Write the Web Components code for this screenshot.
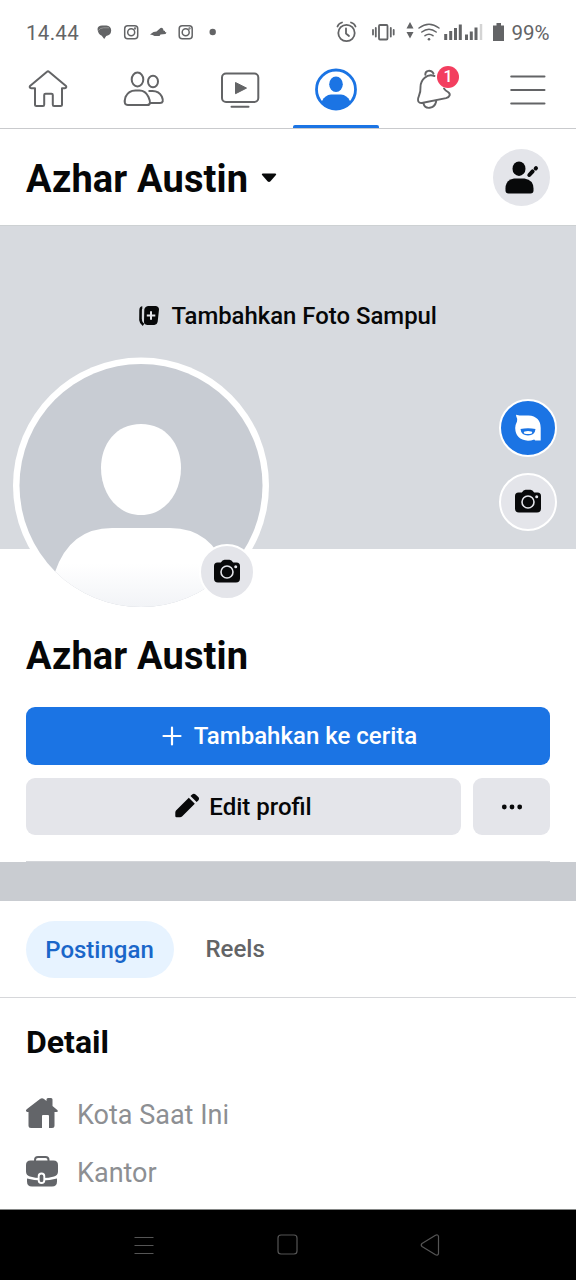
<!DOCTYPE html>
<html lang="id">
<head>
<meta charset="utf-8">
<meta name="viewport" content="width=device-width">
<title>Azhar Austin</title>
<style>
body{margin:0;background:#fff;font-family:Roboto,"Liberation Sans",sans-serif;color:#060708}
</style>
</head>
<body>
<profile-app></profile-app>
<script>
const define = (name, css, html) => customElements.define(name, class extends HTMLElement {
  constructor() {
    super();
    const t = document.createElement('template');
    t.innerHTML = `<style>*{box-sizing:border-box}svg{display:block;flex:none}${css}</style>${html}`;
    this.attachShadow({mode: 'open'}).append(t.content.cloneNode(true));
  }
});

/* Status bar */
define('status-bar', `
:host{display:flex;justify-content:space-between;height:61px;padding:4px 26px 0 26px;color:#636466;font-size:20.5px;line-height:58px}
div{display:flex}
.t{width:64px;letter-spacing:.3px}
.p{width:38.500px;letter-spacing:0;white-space:nowrap}`,
`<div><span class="t">14.44</span>
<svg width="132" height="57" viewBox="90 4 132 57" fill="none" stroke="#636466" stroke-width="1.500">
<path d="M97.500 29q.3-3.500 4.500-3.500h4.500q4.500.3 4.700 5-.2 4.500-5 5.500l-2 3-2.400-3.300q-4-1.700-4.300-6.700z" fill="#636466" stroke="none"/><path d="M98.500 30.500q1.500-2.500 5-2.700h5.500" stroke="#aaa" stroke-width=".7"/>
<g id="ig"><rect x="124.700" y="25.700" width="13" height="13" rx="3"/><circle cx="131.200" cy="32.200" r="3.500"/><circle cx="135" cy="28.500" r=".4"/></g>
<path d="M150 34.500l3.500-2.500 3-.5 4-3.500q3-.7 3 2.500l1.500.5v1l1.500.5-1 1.500-5 .5-1 1.500h-5l-2-.9z" fill="#636466" stroke="none"/>
<use href="#ig" x="54.500"/>
<circle cx="212.700" cy="32" r="3.200" fill="#636466" stroke="none"/></svg></div>
<div><svg width="182" height="57" viewBox="330 4 182 57" fill="none" stroke="#636466" stroke-width="1.800" stroke-linecap="round">
<circle cx="346.500" cy="33" r="8.200"/><path d="M346 28.500v5l3 2.500M337.500 26.500q1-3 4.500-4M355.500 26.500q-1-3-4.500-4"/>
<rect x="379" y="25" width="8.500" height="14.500" rx="1"/><path d="M375.800 28v8.500M373 30v4.500M390.800 28v8.500M393.700 30v4.500"/>
<path d="M410 22l3.500 6.500h-7zM410 38.500l3.500-6.500h-7z" fill="#636466" stroke="none"/>
<path d="M419 28q10-7.500 20 0M421.800 32q7.200-5.500 14.400 0M425 35.700q4-3 8 0" stroke-width="1.500"/><circle cx="429" cy="39.300" r="1.300" fill="#636466" stroke="none"/>
<path d="M445.700 34v6M450.700 31v9M455.500 28v12M460.300 24.500v15.500M466.500 34.500v5.500M471.300 31.500v8.500M476 27.500v12.500" stroke-width="3" stroke-linecap="butt"/><path d="M481 24v16" stroke="#d4d4d4" stroke-width="2.500" stroke-linecap="butt"/>
<path d="M493 25.500h3.500v-2.500h4.500v2.500h3V41h-11z" fill="#636466" stroke="none"/></svg><span class="p">99%</span></div>`);

/* Main navigation */
define('nav-tab', `:host{display:block;flex:1;height:67px}`, `<slot></slot>`);
define('top-nav', `
:host{display:flex;height:68px;border-bottom:1px solid #c9cacd}
.bell{position:relative;display:block;height:67px}
.badge{position:absolute;left:53px;top:5px;width:22px;height:22px;border-radius:50%;background:#f33e5f;color:#fff;font:500 16px/22px Roboto,sans-serif;text-align:center}`,
`<nav-tab><svg width="96" height="67" viewBox="0 61 96 67" fill="none" stroke="#636466" stroke-width="2" stroke-linejoin="round"><path d="M47 71.700q1-1 2 0L66 86q1 2-1.300 2.200h-2.700v16.300q0 1.500-1.500 1.500H54q-1.200 0-1.200-1.500V95q0-1.200-1.300-1.200h-6q-1.300 0-1.300 1.200v9.500q0 1.500-1.200 1.500h-6.500q-1.500 0-1.500-1.500V88.200h-3.700q-2.300-.2-1.300-2.200z"/></svg></nav-tab>
<nav-tab><svg width="96" height="67" viewBox="96 61 96 67" fill="none" stroke="#636466" stroke-width="2" stroke-linejoin="round"><ellipse cx="137.500" cy="79.500" rx="5.800" ry="6.900"/><ellipse cx="153" cy="81.500" rx="5" ry="5.800"/><path d="M135.500 90.500h4q6 0 9 6.500 3.500 8-1.300 8H128q-5 0-2.500-8 3-6.500 10-6.500zM148.500 91h4q6.500 0 9.300 5.500 2.700 6.500-1.800 6.500h-10"/></svg></nav-tab>
<nav-tab><svg width="96" height="67" viewBox="192 61 96 67" fill="none" stroke="#636466" stroke-width="2"><rect x="222" y="73.500" width="36.300" height="28.500" rx="4"/><path d="M231.500 106.700h17" stroke-linecap="round"/><path d="M235.500 82.500l11 5.600-11 5.600z" fill="#636466" stroke-width="1" stroke-linejoin="round"/></svg></nav-tab>
<nav-tab><svg width="96" height="67" viewBox="288 61 96 67" fill="#1b74e4"><clipPath id="c"><circle cx="336" cy="89.500" r="20"/></clipPath><circle cx="336" cy="89.500" r="19.500" fill="none" stroke="#1b74e4" stroke-width="2.800"/><ellipse cx="336" cy="84.300" rx="6.800" ry="7.700"/><path clip-path="url(#c)" d="M322 101q3-6 9-6.500h10q6 .5 9 6.500v12h-28z"/><path d="M293 128v-1q0-2 2-2h82q2 0 2 2v1z"/></svg></nav-tab>
<nav-tab><span class="bell"><svg width="96" height="67" viewBox="384 61 96 67" fill="none" stroke="#636466" stroke-width="1.900" stroke-linecap="round"><path d="M425.300 74.800C425 70 431 69.500 433.500 73.500M434.500 76C427 73 420.500 80 420.500 87C421 95 417.500 96.500 418 100C418 103 420.500 103.300 423 102.800L446 98.200C450 97 451 94 448 92C445.500 90.500 445 90 444 88.500M423.500 103.500C425 110 434.500 109 436.200 101.500"/></svg><span class="badge">1</span></span></nav-tab>
<nav-tab><svg width="96" height="67" viewBox="480 61 96 67" stroke="#636466" stroke-width="2" stroke-linecap="round"><path d="M511.200 76.500h33.300M511.200 90h33.300M511.200 103.500h33.300"/></svg></nav-tab>`);

/* Round icon button */
define('round-button', `
:host{display:flex;align-items:center;justify-content:center;width:58px;height:58px;border-radius:50%;background:#e4e5ea;box-sizing:border-box}`, `<slot></slot>`);
define('camera-icon', `:host{display:block}`,
`<svg width="28" height="26" viewBox="0 0 28 26"><path d="M4.500 3.500h3.300Q9.500.800 11.500.800h5q2 0 3.700 2.700h3.300q3.500 0 3.500 3.500v12.500q0 4-4 4H5q-4 0-4-4V7q0-3.500 3.500-3.500z" fill="#08090a"/><circle cx="14" cy="13" r="6" fill="none" stroke="#e4e5ea" stroke-width="1.600"/><circle cx="22.700" cy="7.700" r="1.500" fill="#e4e5ea"/></svg>`);

define('account-header', `
:host{display:flex;align-items:center;height:96px;padding:0 26px}
h1{margin:0;font:700 38px/96px Roboto,sans-serif;padding-top:3px;letter-spacing:.15px;width:235px;white-space:nowrap}
.caret{margin-top:2px}
round-button{margin:1px 0 0 auto;width:57px;height:57px}`,
`<h1>Azhar Austin</h1><svg class="caret" width="16" height="10" viewBox="0 0 16 10"><path d="M1.800.500h12.400q1.700 0 .7 1.500L9.500 8.200q-1.500 1.500-3 0L1.100 2q-1-1.500.7-1.500z" fill="#08090a"/></svg>
<round-button><svg width="57" height="57" viewBox="493 149 57 57" fill="#08090a"><ellipse cx="519" cy="168.700" rx="6.500" ry="7.300"/><path d="M514 178.500h10.500q9 1.500 9 10v2q0 3-3 3h-22q-3 0-3-3v-2q0-8.500 8.500-10z"/><path d="M529.300 175l3.300-3.600M535.700 168.500l.3-.3" fill="none" stroke="#08090a" stroke-width="4" stroke-linecap="round"/></svg></round-button>`);

/* Cover photo, side buttons and profile picture */
define('cover-photo', `
:host{display:block;position:relative;height:324px;background:#d7dadf;border-top:1px solid #cdd1d3}
.add{display:flex;align-items:center;height:180px;padding-left:138px}
.add span{margin-left:11.500px;font:500 23.900px/30px Roboto,sans-serif;white-space:nowrap}
.side{position:absolute;right:19px;top:173px;display:flex;flex-direction:column;gap:16px}
.side round-button,.cam{border:2px solid #fff}
.blue{background:#1b74e4}
.avatar{position:absolute;left:13px;top:131px}
.cam{position:absolute;left:199px;top:318px;width:56px;height:56px}
.low{margin-top:-1px}`,
`<div class="add"><svg width="22" height="22" viewBox="138 305 22 22"><path d="M148 306h8q3 .5 3 3.500l-1.300 12q-.5 3-3.500 3.500h-7q-3.500-.5-3.200-3.500l.3-12q.5-3 3.700-3.500z" fill="#08090a"/><path d="M142.300 307.500q-1.500 0-1.700 2.500l-.1 10q.3 3 3 4.800" fill="none" stroke="#08090a" stroke-width="2.600"/><path d="M151 311.300v8.500M146.800 315.500h8.500" stroke="#e4e5ea" stroke-width="2"/></svg><span>Tambahkan Foto Sampul</span></div>
<svg class="avatar" width="256" height="256" viewBox="13 357 256 256"><defs><linearGradient id="g" x1="0" x2="0" y1="0" y2="1"><stop offset=".4" stop-color="#fff"/><stop offset="1" stop-color="#eff1f5"/></linearGradient><clipPath id="a"><circle cx="141" cy="485.500" r="121.500"/></clipPath></defs><circle cx="141" cy="485.500" r="128" fill="#fff"/><circle cx="141" cy="485.500" r="121.500" fill="#c8ccd3"/><path d="M141 424c25 0 40 20 40 44s-15 47-40 47-40-23-40-47 15-44 40-44z" fill="#fff"/><g clip-path="url(#a)"><path d="M13 613L55 572Q70 528 112 528h58q42 0 57 44v45z" fill="url(#g)"/></g></svg>
<div class="side"><round-button class="blue"><svg width="28" height="30" viewBox="514 413 28 30"><path d="M516 414.800l3.500.7h9q12 .8 12.200 12.500v12.500h-5.500l-1-1q-3 1.200-6.200 1.200-12.500-.9-12.800-12.700 0-3 1.800-6.500 1-2-.7-5z" fill="#fff"/><path d="M520.500 429q7.500-1.500 15 0-.7 6.500-7.500 6.500t-7.500-6.500z" fill="#1b74e4"/><ellipse cx="528" cy="432.500" rx="4.200" ry="1.500" fill="#fff"/></svg></round-button><round-button><camera-icon class="low"></camera-icon></round-button></div>
<round-button class="cam"><camera-icon></camera-icon></round-button>`);

define('action-button', `
:host{display:flex;align-items:center;justify-content:center;height:58px;border-radius:9px;background:#e4e5ea;font-weight:500;font-size:24px;line-height:58px;white-space:nowrap}`, `<slot></slot>`);

define('profile-actions', `
:host{display:block;height:313px;padding:81px 26px 0}
h2{margin:0;height:77px;font:700 38px/52px Roboto,sans-serif;letter-spacing:.15px}
.story{background:#1b74e4;color:#fff;gap:12px;padding-left:3px;box-sizing:border-box}
.row{display:flex;gap:12px;margin:13px 0 26px}
.edit{width:435px;height:57px;gap:9px}
.edit svg{margin:-2px 0 0 -1px}
.more{flex:1;height:57px}
hr{margin:0;border:0;height:1px;background:#d3d5d9}`,
`<h2>Azhar Austin</h2>
<action-button class="story"><svg width="20" height="20" viewBox="0 0 20 20" stroke="#fff" stroke-width="2.200" stroke-linecap="round"><path d="M10 1.500v17M1.500 10h17"/></svg><span>Tambahkan ke cerita</span></action-button>
<div class="row"><action-button class="edit"><svg width="26" height="26" viewBox="0 0 26 26" fill="#08090a"><path d="M2 17.500L14.800 4.700l6 6L8 23.500q-.8.700-2 .7H2.500q-1.200 0-1.200-1.200v-3.500q0-1.200.7-2zM16.500 3l1.600-1.600q1.700-1.500 3.500 0l2.700 2.700q1.500 1.600 0 3.300L22.600 9z"/></svg><span>Edit profil</span></action-button>
<action-button class="more"><svg width="22" height="6" viewBox="0 0 22 6" fill="#08090a"><circle cx="3.300" cy="3" r="2.400"/><circle cx="11" cy="3" r="2.400"/><circle cx="18.700" cy="3" r="2.400"/></svg></action-button></div><hr>`);

define('section-tabs', `
:host{display:flex;align-items:center;gap:32px;height:136px;padding:0 25.500px;border-top:39px solid #c9ccd1;border-bottom:1px solid #d6d7da;font-weight:500;font-size:24px;line-height:58px;color:#636466;box-sizing:border-box}
.on{width:148px;height:57px;border-radius:29px;background:#e7f3ff;color:#1a66c9;text-align:center}`,
`<span class="on">Postingan</span><span>Reels</span>`);

define('detail-row', `:host{display:flex;align-items:center;height:58px;gap:19px;font-size:27px;color:#8d8f93}`, `<slot></slot>`);
define('detail-list', `
:host{display:block;height:211px;padding:21px 26px 0;box-sizing:border-box}
h3{margin:0 0 20px;padding-top:1px;font:700 32px/44px Roboto,sans-serif}
span{padding-top:3px}`,
`<h3>Detail</h3>
<detail-row><svg width="32" height="32" viewBox="26 1097 32 32" fill="#636569"><path d="M27 1109l13-10q2-1.500 4 0l2.500 2v-1.500q0-1.500 1.500-1.500h3q1.500 0 1.500 1.500v6.500l4.800 4q1.500 2-1 2h-1.800v13.500q0 2.500-2.500 2.500h-3v-12q0-1-1-1h-5q-1 0-1 1v12H31q-2.500 0-2.500-2.500V1112h-1.300q-2.400-1-.2-3z"/></svg><span>Kota Saat Ini</span></detail-row>
<detail-row><svg width="32" height="32" viewBox="26 1155 32 32"><path d="M35 1162v-2q0-3 3-3h7.500q3 0 3 3v2" fill="none" stroke="#636569" stroke-width="2"/><path d="M30.500 1160.500h23q4.500 0 4.500 4.500v6.500q0 4-4 5-5 1.500-12 1.500t-12-1.500q-4-1-4-5V1165q0-4.500 4.500-4.500zM27 1178.500q7 2 15 2t15-2v3q0 5-5 5H32q-5 0-5-5z" fill="#636569"/><rect x="38.700" y="1173.500" width="5.600" height="9.500" rx="2.800" fill="#636569" stroke="#fff" stroke-width="1.900"/></svg><span>Kantor</span></detail-row>`);

define('system-nav', `:host{display:block;height:71px;background:#000;border-top:1px solid #858786;box-sizing:border-box}`,
`<svg width="576" height="70" viewBox="0 1210 576 70" fill="none" stroke="#555" stroke-width="1.200" stroke-linejoin="round"><path d="M134.500 1237.500h19M134.500 1245.500h19M134.500 1253.500h19"/><rect x="278" y="1235" width="19" height="19" rx="3"/><path d="M422 1243.500l13.500-8.300q2.500-1 3 1.300v17q-.5 2.300-3 1.300L422 1246.500q-1.500-1.500 0-3z"/></svg>`);

define('profile-app', `:host{display:flex;flex-direction:column;width:576px;height:1280px;overflow:hidden;background:#fff}:host>*{flex:none}`,
`<status-bar></status-bar><top-nav></top-nav><account-header></account-header><cover-photo></cover-photo><profile-actions></profile-actions><section-tabs></section-tabs><detail-list></detail-list><system-nav></system-nav>`);
</script>
</body>
</html>
